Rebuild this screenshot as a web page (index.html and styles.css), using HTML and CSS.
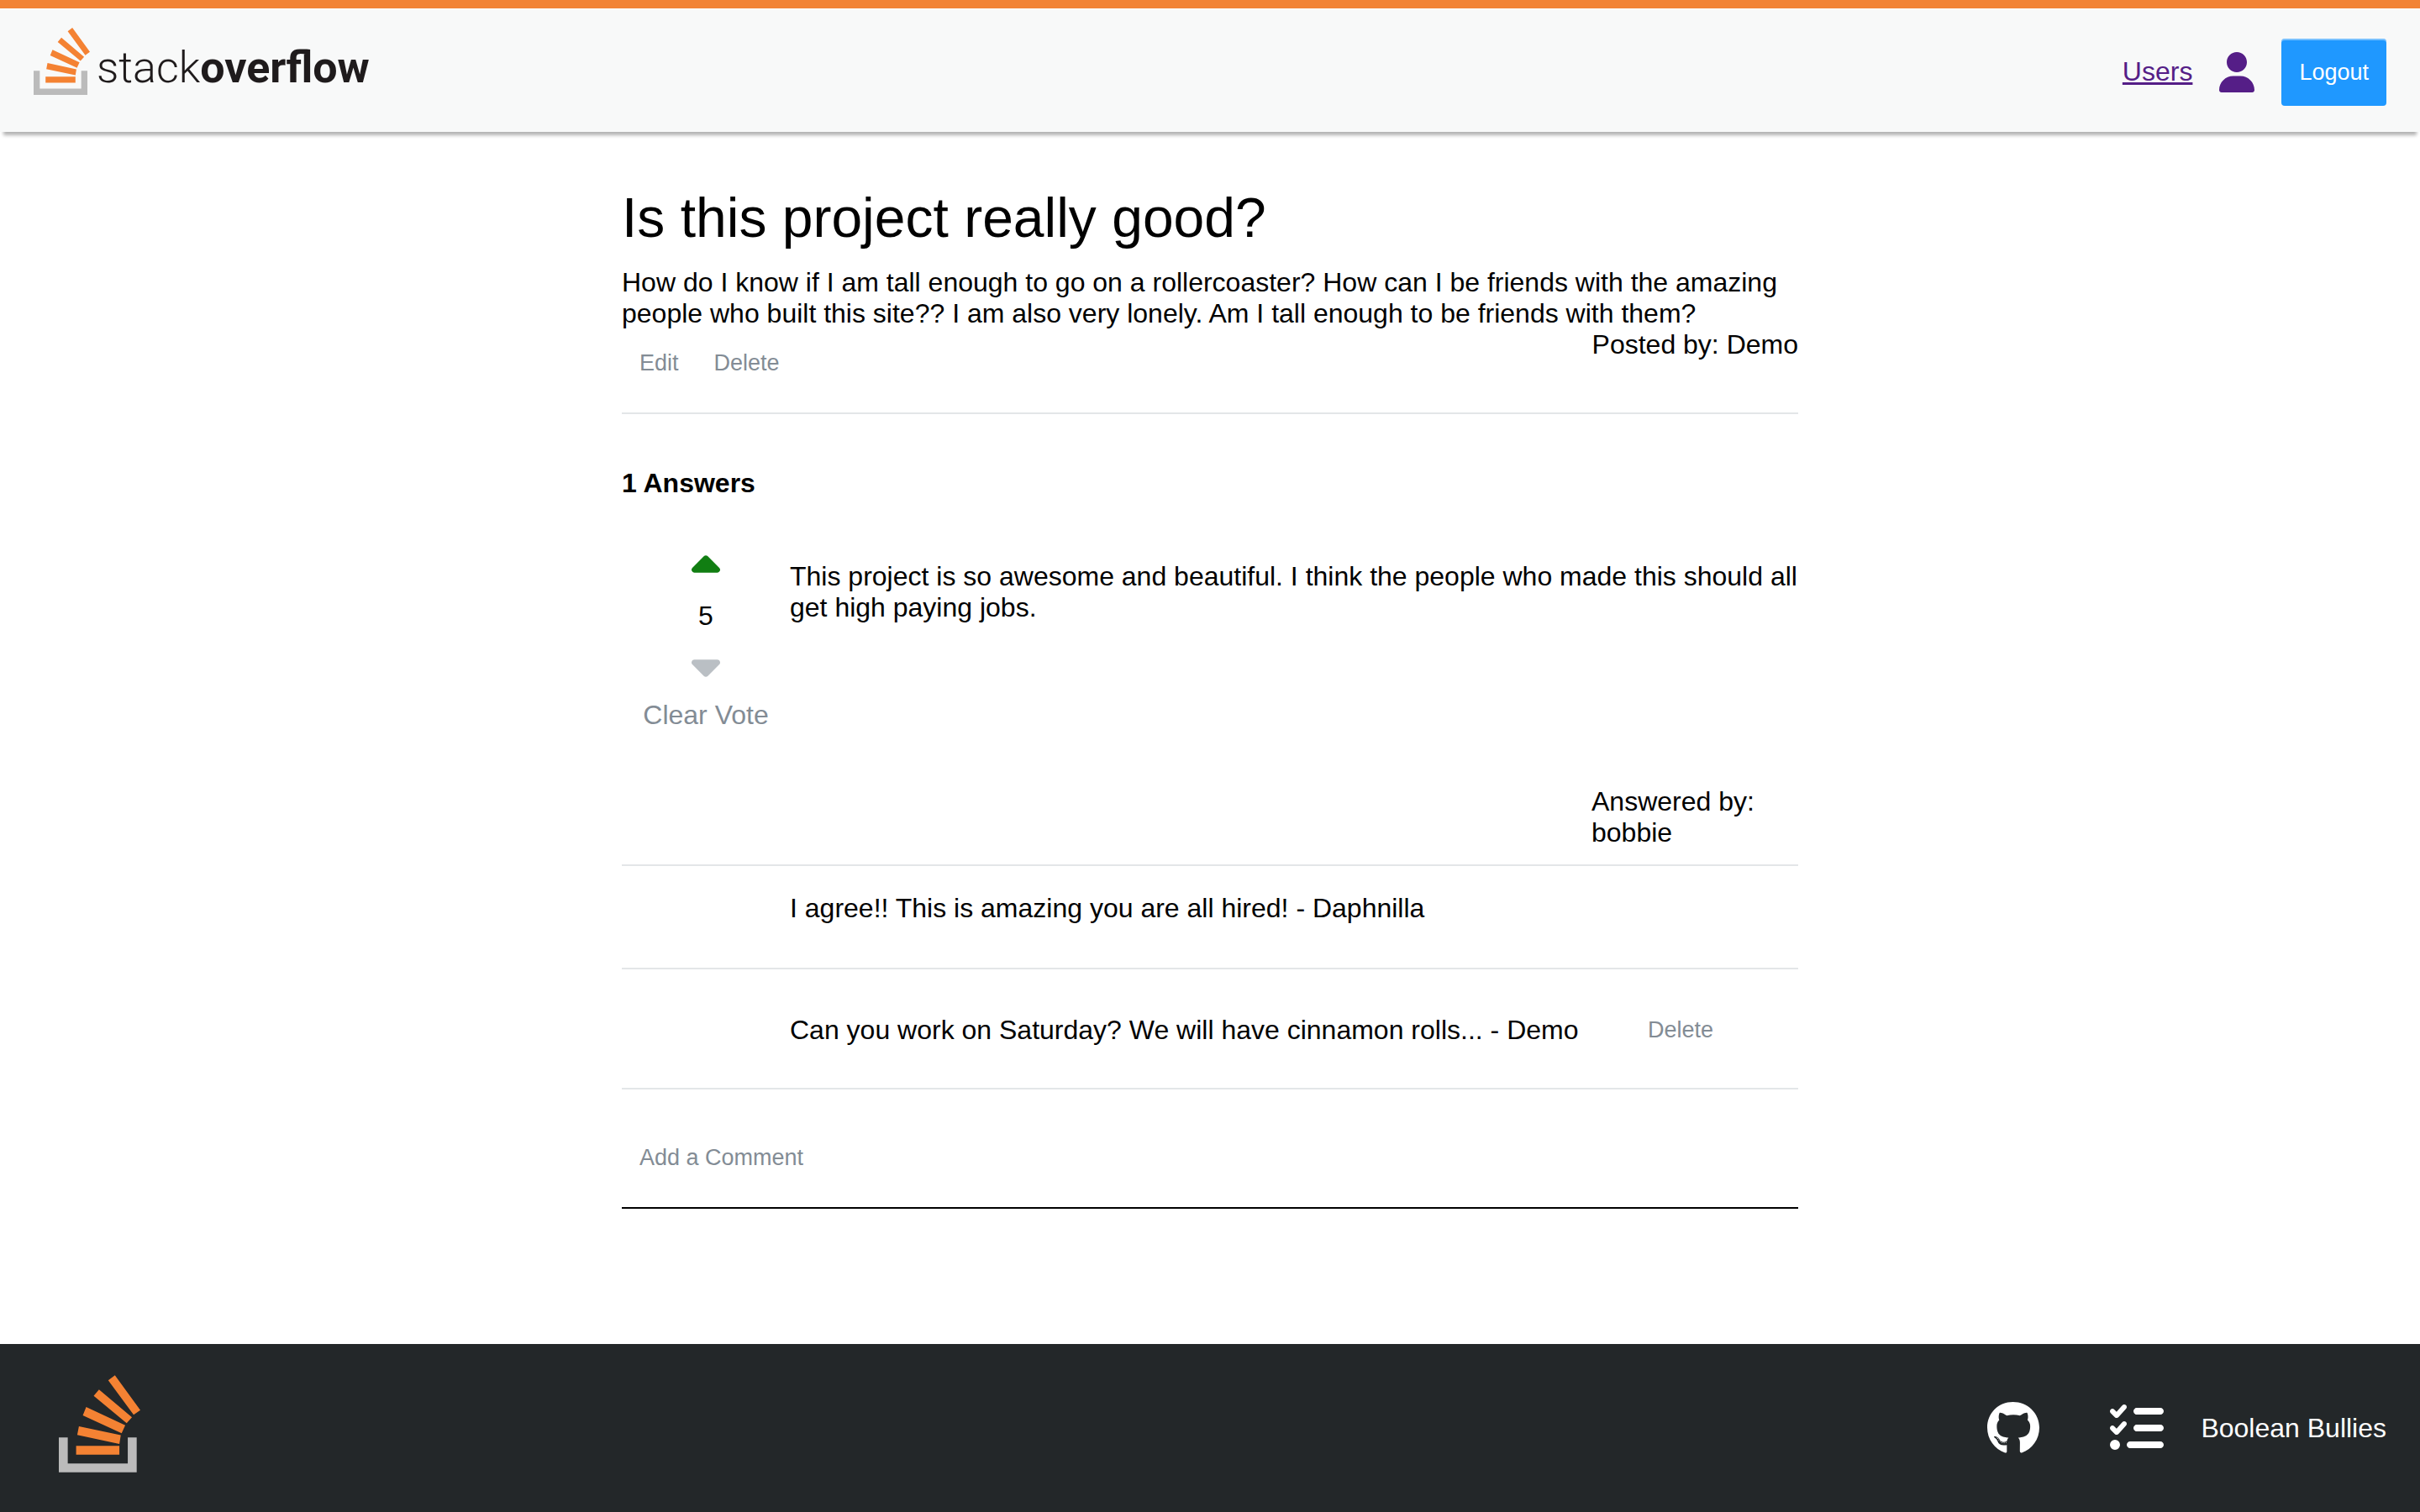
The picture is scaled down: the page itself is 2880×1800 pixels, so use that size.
FILE: index.html
```html
<!DOCTYPE html>
<html lang="en">
<head>
<meta charset="utf-8">
<title>Is this project really good? - Stack Overflow</title>
<link rel="stylesheet" href="styles.css">
</head>
<body>
<svg class="defs" aria-hidden="true">
  <symbol id="stack" viewBox="0 0 292 348">
    <path fill="#bbbbbb" d="M0 223H32V316H247V223H279V348H0Z"/>
    <path fill="#f48233" d="M62 253H217V285H62ZM72 183L222 215L217 246L66 214ZM98 114L238 179L225 208L86 144ZM144 51L262 151L243 172L125 74ZM201 0L292 125L268 142L177 18Z"/>
  </symbol>
</svg>

<header class="topbar">
  <a class="brand" href="#" aria-label="Stack Overflow">
    <svg class="brand-icon"><use href="#stack"/></svg>
    <span class="brand-name"><span class="brand-light">stack</span><span class="brand-bold">overflow</span></span>
  </a>
  <nav class="topnav">
    <a class="nav-link" href="#">Users</a>
    <a class="nav-icon" href="#" aria-label="Profile">
      <svg width="42" height="48" viewBox="0 0 448 512"><path fill="currentColor" d="M224 256c70.7 0 128-57.3 128-128S294.7 0 224 0S96 57.3 96 128s57.3 128 128 128zm-45.7 48C79.8 304 0 383.8 0 482.3C0 498.7 13.3 512 29.7 512H418.3c16.4 0 29.7-13.3 29.7-29.7C448 383.8 368.2 304 269.7 304H178.3z"/></svg>
    </a>
    <button class="btn btn-primary" type="button">Logout</button>
  </nav>
</header>

<main class="content">
  <section class="question">
    <h1 class="title">Is this project really good?</h1>
    <p>How do I know if I am tall enough to go on a rollercoaster? How can I be friends with the amazing people who built this site?? I am also very lonely. Am I tall enough to be friends with them?</p>
    <div class="question-meta">
      <div class="actions">
        <button class="btn" type="button">Edit</button><button class="btn" type="button">Delete</button>
      </div>
      <p>Posted by: Demo</p>
    </div>
  </section>

  <h2 class="answers-title">1 Answers</h2>

  <article class="answer">
    <div class="vote">
      <div class="vote-arrows">
        <button class="arrow arrow-active" type="button" aria-label="Upvote">
          <svg width="34" height="21" viewBox="0 128 320 192"><path fill="currentColor" d="M182.6 137.4c-12.5-12.5-32.8-12.5-45.3 0l-128 128c-9.2 9.2-11.9 22.9-6.9 34.9s16.6 19.8 29.6 19.8H288c12.9 0 24.6-7.8 29.6-19.8s2.2-25.7-6.9-34.9l-128-128z"/></svg>
        </button>
        <span>5</span>
        <button class="arrow" type="button" aria-label="Downvote">
          <svg width="34" height="21" viewBox="0 192 320 192"><path fill="currentColor" d="M137.4 374.6c12.5 12.5 32.8 12.5 45.3 0l128-128c9.2-9.2 11.9-22.9 6.9-34.9s-16.6-19.8-29.6-19.8L32 192c-12.9 0-24.6 7.8-29.6 19.8s-2.2 25.7 6.9 34.9l128 128z"/></svg>
        </button>
      </div>
      <button class="clear-vote" type="button">Clear Vote</button>
    </div>
    <p class="answer-text">This project is so awesome and beautiful. I think the people who made this should all get high paying jobs.</p>
    <p class="answered-by">Answered by: bobbie</p>
  </article>

  <div class="comment comment-plain">
    <p class="comment-text">I agree!! This is amazing you are all hired! - Daphnilla</p>
  </div>
  <div class="comment">
    <p class="comment-text">Can you work on Saturday? We will have cinnamon rolls... - Demo</p>
    <button class="btn" type="button">Delete</button>
  </div>
  <div class="add-comment">
    <button class="btn" type="button">Add a Comment</button>
  </div>
</main>

<footer class="footer">
  <a href="#" class="footer-logo" aria-label="Home"><svg class="footer-icon"><use href="#stack"/></svg></a>
  <div class="footer-links">
    <a class="footer-github" href="#" aria-label="GitHub">
      <svg width="62" height="64" viewBox="0 0 496 512"><path fill="currentColor" d="M165.9 397.4c0 2-2.3 3.6-5.2 3.6-3.3.3-5.6-1.3-5.6-3.6 0-2 2.3-3.6 5.2-3.6 3-.3 5.6 1.3 5.6 3.6zm-31.1-4.5c-.7 2 1.3 4.3 4.3 4.9 2.6 1 5.6 0 6.2-2s-1.3-4.3-4.3-5.2c-2.6-.7-5.5.3-6.2 2.3zm44.2-1.7c-2.9.7-4.9 2.6-4.6 4.9.3 2 2.9 3.3 5.9 2.6 2.9-.7 4.9-2.6 4.6-4.6-.3-1.9-3-3.2-5.9-2.9zM244.8 8C106.1 8 0 113.3 0 252c0 110.9 69.8 205.8 169.5 239.2 12.8 2.3 17.3-5.6 17.3-12.1 0-6.2-.3-40.4-.3-61.4 0 0-70 15-84.7-29.8 0 0-11.4-29.1-27.8-36.6 0 0-22.9-15.7 1.6-15.4 0 0 24.9 2 38.6 25.8 21.9 38.6 58.6 27.5 72.9 20.9 2.3-16 8.8-27.1 16-33.7-55.9-6.2-112.3-14.3-112.3-110.5 0-27.5 7.6-41.3 23.6-58.9-2.6-6.5-11.1-33.3 2.6-67.9 20.9-6.5 69 27 69 27 20-5.6 41.5-8.5 62.8-8.5s42.8 2.9 62.8 8.5c0 0 48.1-33.6 69-27 13.7 34.7 5.2 61.4 2.6 67.9 16 17.7 25.8 31.5 25.8 58.9 0 96.5-58.9 104.2-114.8 110.5 9.2 7.9 17 22.9 17 46.4 0 33.7-.3 75.4-.3 83.6 0 6.5 4.6 14.4 17.3 12.1C428.2 457.8 496 362.9 496 252 496 113.3 383.5 8 244.8 8zM97.2 352.9c-1.3 1-1 3.3.7 5.2 1.6 1.6 3.9 2.3 5.2 1 1.3-1 1-3.3-.7-5.2-1.6-1.6-3.9-2.3-5.2-1zm-10.8-8.1c-.7 1.3.3 2.9 2.3 3.9 1.6 1 3.6.7 4.3-.7.7-1.3-.3-2.9-2.3-3.9-2-.6-3.6-.3-4.3.7zm32.4 35.6c-1.6 1.3-1 4.3 1.3 6.2 2.3 2.3 5.2 2.6 6.5 1 1.3-1.3.7-4.3-1.3-6.2-2.2-2.3-5.2-2.6-6.5-1zm-11.4-14.7c-1.6 1-1.6 3.6 0 5.9 1.6 2.3 4.3 3.3 5.6 2.3 1.6-1.3 1.6-3.9 0-6.2-1.4-2.3-4-3.3-5.6-2z"/></svg>
    </a>
    <a class="footer-team" href="#">
      <svg width="64" height="64" viewBox="0 0 512 512"><path fill="currentColor" d="M152.1 38.2c9.9 8.9 10.7 24 1.8 33.9l-72 80c-4.4 4.9-10.6 7.8-17.2 7.9s-12.9-2.4-17.6-7L7 113C-2.3 103.6-2.3 88.4 7 79s24.6-9.4 33.9 0l22.1 22.1 55.1-61.2c8.9-9.9 24-10.7 33.9-1.8zm0 160c9.9 8.9 10.7 24 1.8 33.9l-72 80c-4.4 4.9-10.6 7.8-17.2 7.9s-12.9-2.4-17.6-7L7 273c-9.4-9.4-9.4-24.6 0-33.9s24.6-9.4 33.9 0l22.1 22.1 55.1-61.2c8.9-9.9 24-10.7 33.9-1.8zM224 96c0-17.7 14.3-32 32-32H480c17.7 0 32 14.3 32 32s-14.3 32-32 32H256c-17.7 0-32-14.3-32-32zm0 160c0-17.7 14.3-32 32-32H480c17.7 0 32 14.3 32 32s-14.3 32-32 32H256c-17.7 0-32-14.3-32-32zM160 416c0-17.7 14.3-32 32-32H480c17.7 0 32 14.3 32 32s-14.3 32-32 32H192c-17.7 0-32-14.3-32-32zM48 368a48 48 0 1 1 0 96 48 48 0 1 1 0-96z"/></svg>
      <span>Boolean Bullies</span>
    </a>
  </div>
</footer>
</body>
</html>
```
FILE: styles.css
```css
* { box-sizing: border-box; }

body {
  margin: 0;
  min-height: 100vh;
  display: flex;
  flex-direction: column;
  background: #ffffff;
  color: #000000;
  font-family: "Liberation Sans", Arial, Helvetica, sans-serif;
  font-size: 32px;
  line-height: 37px;
}

h1, h2, p { margin: 0; }
svg { display: block; }
.defs { display: none; }

button {
  border: 0;
  padding: 0;
  background: none;
  font-family: inherit;
  cursor: pointer;
}

.btn {
  padding: 24px 21px;
  color: #838c95;
  font-size: 27px;
  line-height: 32px;
}

.btn-primary {
  border-radius: 4px;
  background: #1f98ff;
  box-shadow: inset 0 2px 0 rgba(255, 255, 255, 0.4);
  color: #ffffff;
}

/* Header */
.topbar {
  display: flex;
  align-items: center;
  justify-content: space-between;
  padding: 14px 40px 10px;
  min-height: 157px;
  border-top: 10px solid #f28335;
  background: #f8f9f9;
  box-shadow: inset 0 2px 0 #fcfdfd, 0 8px 4px -4px rgba(0, 0, 0, 0.3);
}

.brand {
  align-self: flex-start;
  display: flex;
  align-items: center;
  gap: 8px;
  padding-top: 9px;
  color: #1f1b1c;
  text-decoration: none;
}

.brand-icon { width: 67px; height: 80px; }

.brand-name {
  display: flex;
  padding-top: 16px;
  font-family: Roboto, "Liberation Sans", sans-serif;
  font-size: 52px;
  line-height: 60px;
}

.brand-light { font-weight: 300; }
.brand-bold { font-weight: 700; }

.topnav {
  display: flex;
  align-items: center;
  gap: 32px;
}

.nav-link, .nav-icon { color: #551e87; }

/* Question */
.content {
  flex: 1;
  width: 100%;
  max-width: 1400px;
  margin: 0 auto;
  padding: 64px 0 100px;
}

.question {
  padding-bottom: 19px;
  border-bottom: 2px solid #e3e6e8;
}

.title {
  margin-bottom: 21px;
  font-size: 66px;
  font-weight: 400;
  line-height: 76px;
}

.question-meta {
  display: flex;
  justify-content: space-between;
}

.actions { display: flex; }

.answers-title {
  margin-top: 64px;
  font-size: 32px;
  font-weight: 700;
}

/* Answer */
.answer {
  display: grid;
  grid-template-columns: 200px 1fr;
  row-gap: 66px;
  padding: 67px 0 19px;
  border-bottom: 2px solid #e3e6e8;
}

.vote {
  display: flex;
  flex-direction: column;
  align-items: center;
  gap: 27px;
}

.vote-arrows {
  display: flex;
  flex-direction: column;
  align-items: center;
  gap: 33px;
}

.arrow { color: #babfc4; }
.arrow-active { color: #117e12; }

.answer-text { padding-top: 7px; }

.clear-vote {
  color: #838c95;
  font-size: 32px;
  line-height: 37px;
}

.answered-by {
  grid-column: 2;
  justify-self: end;
  width: 246px;
}

/* Comments */
.comment {
  display: grid;
  grid-template-columns: 200px 1fr 200px;
  align-items: center;
  justify-items: start;
  padding: 32px 0 29px;
  border-bottom: 2px solid #e3e6e8;
}

.comment-plain { padding-bottom: 52px; }
.comment-text { grid-column: 2; }

.add-comment {
  padding: 41px 0 19px;
  border-bottom: 2px solid #000000;
}

/* Footer */
.footer {
  display: flex;
  align-items: flex-start;
  justify-content: space-between;
  min-height: 200px;
  padding: 37px 40px 37px 70px;
  background: #232729;
}

.footer-icon { width: 97px; height: 116px; }

.footer-links {
  align-self: center;
  display: flex;
  align-items: center;
  gap: 84px;
}

.footer-links a { color: #ffffff; text-decoration: none; }

.footer-team {
  display: flex;
  align-items: center;
  gap: 44px;
}
```
